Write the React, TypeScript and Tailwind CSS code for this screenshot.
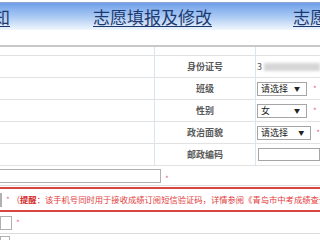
import React from "react";

const font = { fontFamily: '"Noto Sans CJK SC", "Noto Sans", sans-serif' };

function Select({ text, width }: { text: string; width: string }) {
  return (
    <div className={`${width} h-[14px] ml-[1px] border border-[#a5a5a5] bg-white flex items-center justify-between pl-[3px] pr-[6px]`}>
      <span className="text-[9px] leading-none text-[#222]">{text}</span>
      <span className="text-[6px] leading-none text-[#222]">▼</span>
    </div>
  );
}

function Star({ className = "" }: { className?: string }) {
  return <span className={`text-[8px] leading-none text-[#e0708a] ${className}`}>*</span>;
}

function Row({ label, children }: { label: string; children?: React.ReactNode }) {
  return (
    <div className="grid grid-cols-[155px_101px_64px] h-[22px] border-b border-[#e2e2e2]">
      <div className="border-r border-[#d8e6ef]" />
      <div className="border-r border-[#d8e6ef] flex items-center justify-center text-[9px] font-bold text-[#595959]">
        {label}
      </div>
      <div className="flex items-center">{children}</div>
    </div>
  );
}

export default function App() {
  return (
    <div className="w-[320px] h-[240px] overflow-hidden bg-white" style={font}>
      <div className="h-[2px] bg-white" />
      <div className="h-[28px] border-t border-[#8fa9cf] bg-linear-to-b from-[#6f9fea] via-[#a9c9f3] to-[#f2f7fd] flex items-center whitespace-nowrap text-[17px] leading-none text-[#1d3a70]">
        <span className="ml-[-58px] underline underline-offset-2">填报须知</span>
        <span className="ml-[83px] underline underline-offset-2">志愿填报及修改</span>
        <span className="ml-[81px] underline underline-offset-2">志愿查询</span>
      </div>
      <div className="h-[15px]" />
      <div className="border-t-2 border-[#c8c8c8]">
        <div className="grid grid-cols-[155px_101px_64px] h-[9px] border-b border-[#e2e2e2]">
          <div className="border-r border-[#d8e6ef]" />
          <div className="border-r border-[#d8e6ef]" />
          <div />
        </div>
        <Row label="身份证号">
          <span className="ml-[1px] text-[9px] text-[#555]">3</span>
          <div className="ml-[2px] h-[8px] w-[60px] bg-[#d6d6d6] blur-[1.5px]" />
        </Row>
        <Row label="班级">
          <Select text="请选择" width="w-[50px]" />
          <Star className="ml-[6px]" />
        </Row>
        <Row label="性别">
          <Select text="女" width="w-[50px]" />
          <Star className="ml-[6px]" />
        </Row>
        <Row label="政治面貌">
          <Select text="请选择" width="w-[56px]" />
          <Star className="ml-[5px]" />
        </Row>
        <Row label="邮政编码">
          <div className="ml-[2px] h-[13px] w-[70px] border border-[#a5a5a5] bg-white" />
        </Row>
        <div className="h-[20px] border-b border-[#dcdcdc] flex items-start">
          <div className="mt-[3px] ml-[-10px] h-[14px] w-[171px] border border-[#b0b0b0] bg-white" />
          <Star className="ml-[4px] mt-[9px]" />
        </div>
        <div className="mt-[1px] ml-[-4px] w-[330px] h-[25px] border-2 border-[#d8463f] flex items-center whitespace-nowrap">
          <div className="ml-[2px] h-[14px] w-[12px] border border-[#b0b0b0] bg-white" />
          <Star className="ml-[4px] text-[#c03a3a]" />
          <span className="ml-[2px] text-[8.3px] leading-none text-[#e23c3c]">
            （<span className="font-bold text-[#d42b2b]">提醒</span>：该手机号同时用于接收成绩订阅短信验证码，详情参阅《青岛市中考成绩查询办法》）
          </span>
        </div>
        <div className="h-[22px] border-b border-[#dcdcdc] flex items-center">
          <div className="h-[14px] w-[12px] border border-[#b0b0b0] bg-white" />
          <Star className="ml-[4px]" />
        </div>
        <div className="flex">
          <div className="mt-[2px] h-[14px] w-[10px] border border-[#b0b0b0] bg-white" />
        </div>
      </div>
    </div>
  );
}
